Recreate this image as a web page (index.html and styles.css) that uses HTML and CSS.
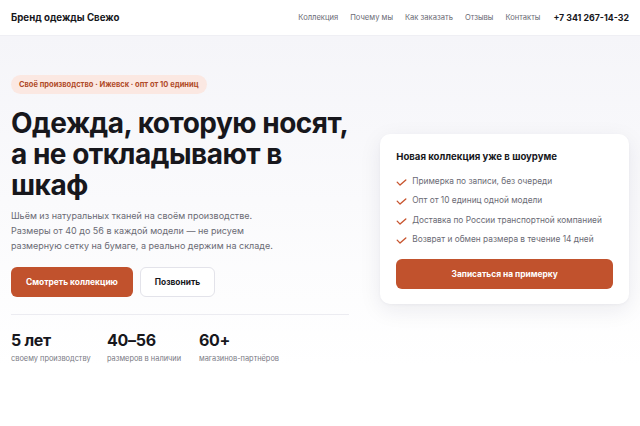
FILE: index.html
```html
<!DOCTYPE html>
<html lang="ru">
<head>
    <meta charset="UTF-8">
    <meta name="viewport" content="width=device-width, initial-scale=1.0">
    <title>Бренд одежды Свежо</title>
    <link rel="stylesheet" href="styles.css">
</head>
<body>
    <header class="header">
        <div class="brand">Бренд одежды Свежо</div>
        <nav class="nav">
            <a href="#">Коллекция</a>
            <a href="#">Почему мы</a>
            <a href="#">Как заказать</a>
            <a href="#">Отзывы</a>
            <a href="#">Контакты</a>
            <a href="#" class="phone">+7 341 267-14-32</a>
        </nav>
    </header>

    <main class="hero">
        <div class="hero-left">
            <span class="badge">Своё производство · Ижевск · опт от 10 единиц</span>
            <h1>Одежда, которую носят, а не откладывают в шкаф</h1>
            <p class="lead">Шьём из натуральных тканей на своём производстве. Размеры от 40 до 56 в каждой модели — не рисуем размерную сетку на бумаге, а реально держим на складе.</p>
            <div class="actions">
                <a href="#" class="btn btn-primary">Смотреть коллекцию</a>
                <a href="#" class="btn btn-ghost">Позвонить</a>
            </div>
            <div class="stats">
                <div class="stat">
                    <div class="stat-num">5 лет</div>
                    <div class="stat-label">своему производству</div>
                </div>
                <div class="stat">
                    <div class="stat-num">40–56</div>
                    <div class="stat-label">размеров в наличии</div>
                </div>
                <div class="stat">
                    <div class="stat-num">60+</div>
                    <div class="stat-label">магазинов-партнёров</div>
                </div>
            </div>
        </div>

        <aside class="card">
            <h2>Новая коллекция уже в шоуруме</h2>
            <ul class="checklist">
                <li><svg viewBox="0 0 12 10"><path d="M1.2 4.6 L4.4 7.9 L10.8 2.2"/></svg>Примерка по записи, без очереди</li>
                <li><svg viewBox="0 0 12 10"><path d="M1.2 4.6 L4.4 7.9 L10.8 2.2"/></svg>Опт от 10 единиц одной модели</li>
                <li><svg viewBox="0 0 12 10"><path d="M1.2 4.6 L4.4 7.9 L10.8 2.2"/></svg>Доставка по России транспортной компанией</li>
                <li><svg viewBox="0 0 12 10"><path d="M1.2 4.6 L4.4 7.9 L10.8 2.2"/></svg>Возврат и обмен размера в течение 14 дней</li>
            </ul>
            <a href="#" class="btn btn-primary btn-wide">Записаться на примерку</a>
        </aside>
    </main>
</body>
</html>
```

FILE: styles.css
```css
* {
    box-sizing: border-box;
}

html, body {
    height: 100%;
}

body {
    margin: 0;
    font-family: 'Inter', 'Noto Sans', sans-serif;
    color: #17171c;
    background: #fff;
}

a {
    text-decoration: none;
    color: inherit;
}

/* шапка */
.header {
    height: 36px;
    padding: 0 11px;
    display: flex;
    align-items: center;
    justify-content: space-between;
    background: #fff;
    border-bottom: 1px solid #efeff4;
}

.brand {
    font-size: 9.7px;
    font-weight: 700;
}

.nav {
    display: flex;
    align-items: center;
    gap: 12px;
    font-size: 7.6px;
    color: #6b6b75;
}

.nav .phone {
    margin-left: 1px;
    font-size: 8.8px;
    font-weight: 700;
    color: #17171c;
}

/* первый экран */
.hero {
    display: grid;
    grid-template-columns: 1.36fr 1fr;
    gap: 31px;
    align-items: center;
    padding: 39px 11px 40px;
    background: linear-gradient(to bottom, #f5f5f9, #ffffff 90%);
}

.hero-left {
    display: flex;
    flex-direction: column;
    align-items: flex-start;
}

.badge {
    padding: 0 8px;
    height: 19px;
    line-height: 19px;
    border-radius: 10px;
    background: #fbe8e2;
    color: #b04a28;
    font-size: 7.5px;
    font-weight: 700;
}

.hero h1 {
    margin: 14px 0 0;
    font-size: 28px;
    line-height: 31px;
    font-weight: 700;
    letter-spacing: -0.5px;
}

.lead {
    margin: 7px 0 0;
    font-size: 9px;
    line-height: 15px;
    color: #6a6a74;
    max-width: 275px;
}

.actions {
    display: flex;
    gap: 7px;
    margin-top: 14px;
}

.btn {
    display: inline-flex;
    align-items: center;
    justify-content: center;
    height: 30px;
    border-radius: 6px;
    font-size: 8.4px;
    font-weight: 700;
}

.btn-primary {
    width: 122px;
    background: #c1522d;
    color: #fff;
}

.btn-ghost {
    width: 75px;
    background: #fff;
    border: 1px solid #e3e3ea;
    color: #17171c;
}

.stats {
    align-self: stretch;
    display: flex;
    margin-top: 17px;
    padding-top: 16px;
    border-top: 1px solid #ececf1;
}

.stat:nth-child(1) {
    width: 96px;
}

.stat:nth-child(2) {
    width: 92px;
}

.stat-num {
    font-size: 16px;
    line-height: 19px;
    font-weight: 700;
    letter-spacing: -0.3px;
}

.stat-label {
    margin-top: 4px;
    font-size: 7.4px;
    line-height: 9px;
    color: #7a7a84;
    white-space: nowrap;
}

/* карточка */
.card {
    background: #fff;
    border-radius: 10px;
    padding: 17px 16px 15px;
    box-shadow: 0 6px 22px rgba(30, 30, 60, 0.08), 0 1px 3px rgba(30, 30, 60, 0.04);
}

.card h2 {
    margin: 0;
    font-size: 9.6px;
    line-height: 12px;
    font-weight: 700;
}

.checklist {
    list-style: none;
    margin: 8px 0 0;
    padding: 0;
}

.checklist li {
    display: flex;
    align-items: center;
    gap: 5px;
    height: 19.3px;
    font-size: 8.3px;
    color: #6a6a74;
}

.checklist svg {
    width: 11px;
    height: 9px;
    flex: none;
    margin-top: 3px;
    fill: none;
    stroke: #c8552f;
    stroke-width: 1.5;
    stroke-linecap: round;
    stroke-linejoin: round;
}

.btn-wide {
    display: flex;
    margin-top: 10px;
    width: 100%;
}
```
